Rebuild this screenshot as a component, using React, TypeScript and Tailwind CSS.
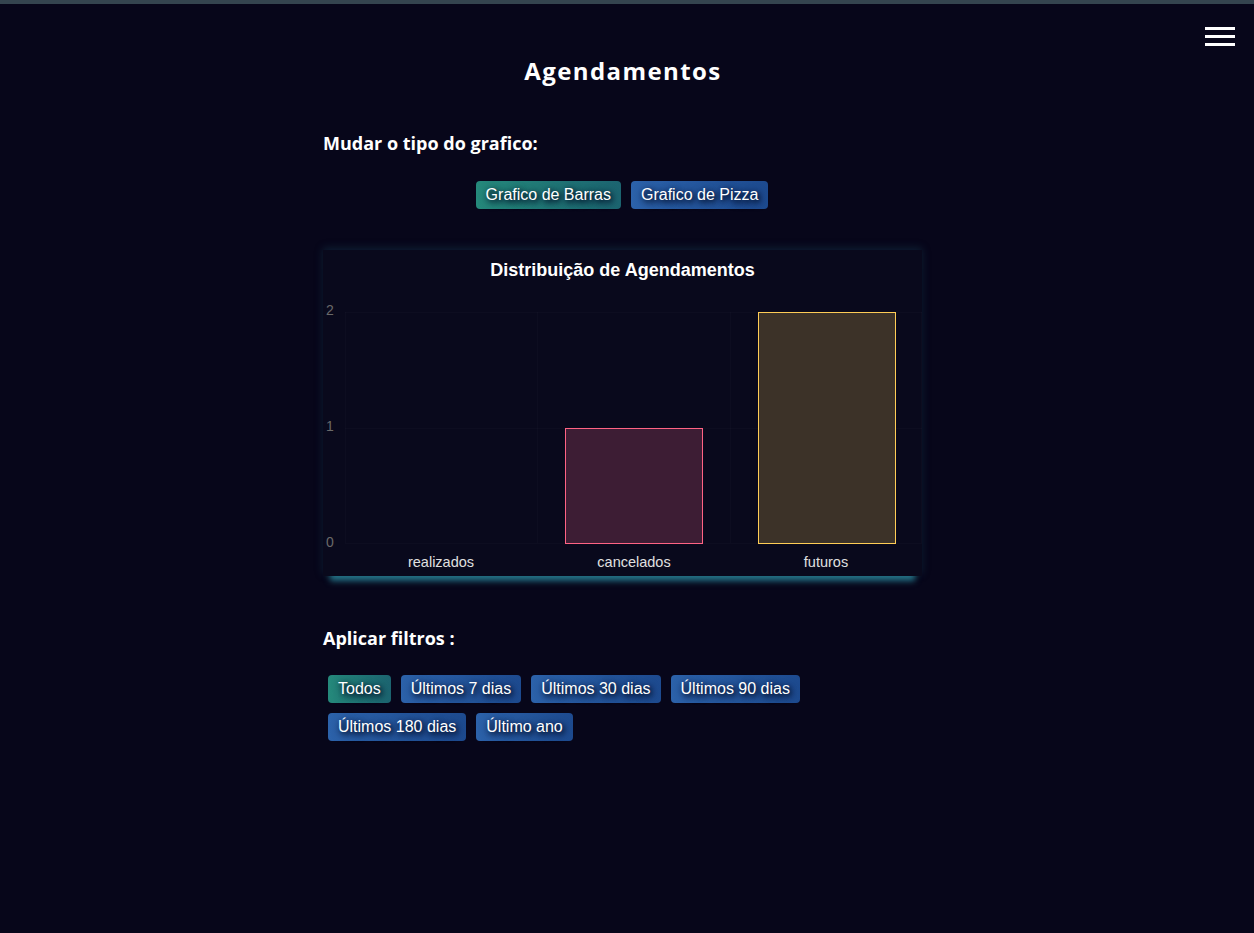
const heading = "font-['Open_Sans','Noto_Sans',sans-serif] font-bold text-white"
const btnBase =
  "m-[5px] h-[28px] px-[10px] rounded-[4px] text-[16px] text-white font-['Liberation_Sans',Arial,sans-serif] [text-shadow:2px_2px_5px_#000c25,1px_2px_9px_#000c25]"
const teal = "bg-gradient-to-r from-[#25897b] to-[#1c6470]"
const blue = "bg-gradient-to-r from-[#2c62aa] to-[#1d4a8f]"

const filters = ["Todos", "Últimos 7 dias", "Últimos 30 dias", "Últimos 90 dias", "Últimos 180 dias", "Último ano"]

function BarChart() {
  const grid = "rgba(255,255,255,0.018)"
  return (
    <svg width="599" height="326" className="block font-['Liberation_Sans',Arial,sans-serif]">
      <text x="299.5" y="26" textAnchor="middle" fill="#ffffff" fontSize="18" fontWeight="bold">
        Distribuição de Agendamentos
      </text>
      {/* grid */}
      {[62, 178, 293].map((y) => (
        <line key={y} x1="22" x2="599" y1={y + 0.5} y2={y + 0.5} stroke={grid} />
      ))}
      {[22, 214, 407, 598].map((x) => (
        <line key={x} x1={x + 0.5} x2={x + 0.5} y1="62" y2="293" stroke={grid} />
      ))}
      {/* y ticks */}
      <text x="3" y="65" fill="#6a6a6a" fontSize="14">2</text>
      <text x="3" y="181" fill="#6a6a6a" fontSize="14">1</text>
      <text x="3" y="297" fill="#6a6a6a" fontSize="14">0</text>
      {/* bars */}
      <rect x="242.5" y="178.5" width="137" height="115" fill="#3d1d34" stroke="#ff6384" strokeWidth="1" />
      <rect x="435.5" y="62.5" width="137" height="231" fill="#3c3228" stroke="#ffcd56" strokeWidth="1" />
      {/* x labels */}
      <text x="118" y="317" textAnchor="middle" fill="#e0e0e0" fontSize="14.5">realizados</text>
      <text x="311" y="317" textAnchor="middle" fill="#e0e0e0" fontSize="14.5">cancelados</text>
      <text x="503" y="317" textAnchor="middle" fill="#e0e0e0" fontSize="14.5">futuros</text>
    </svg>
  )
}

export default function App() {
  return (
    <div className="min-h-[933px] bg-[#07061a] flex flex-col">
      <div className="h-[4px] bg-[#34444f] shrink-0" />

      <div className="relative flex-1">
        {/* ── Hamburger ── */}
        <button className="absolute right-[19px] top-[23px] flex flex-col gap-[5px]">
          <span className="block w-[30px] h-[3px] bg-white" />
          <span className="block w-[30px] h-[3px] bg-white" />
          <span className="block w-[30px] h-[3px] bg-white" />
        </button>

        <div className="pr-[8px]">
          <div className="w-[600px] mx-auto flex flex-col">
            <h1 className={`${heading} text-[24px] tracking-[1.4px] text-center mt-[50px] leading-[34px]`}>
              Agendamentos
            </h1>

            <h2 className={`${heading} text-[18px] mt-[43px] leading-[24px]`}>Mudar o tipo do grafico:</h2>

            <div className="flex justify-center mt-[21px] pr-[2px]">
              <button className={`${btnBase} ${teal}`}>Grafico de Barras</button>
              <button className={`${btnBase} ${blue}`}>Grafico de Pizza</button>
            </div>

            {/* ── Chart ── */}
            <div className="mt-[36px] w-[599px] bg-[#09091c] shadow-[0_12px_6px_-7px_rgba(38,118,138,0.95),0_-2px_8px_rgba(30,80,100,0.35)]">
              <BarChart />
            </div>

            <h2 className={`${heading} text-[18px] mt-[50px] leading-[24px]`}>Aplicar filtros :</h2>

            <div className="flex flex-wrap mt-[20px]">
              {filters.map((f, i) => (
                <button key={f} className={`${btnBase} ${i === 0 ? teal : blue}`}>
                  {f}
                </button>
              ))}
            </div>
          </div>
        </div>
      </div>
    </div>
  )
}
